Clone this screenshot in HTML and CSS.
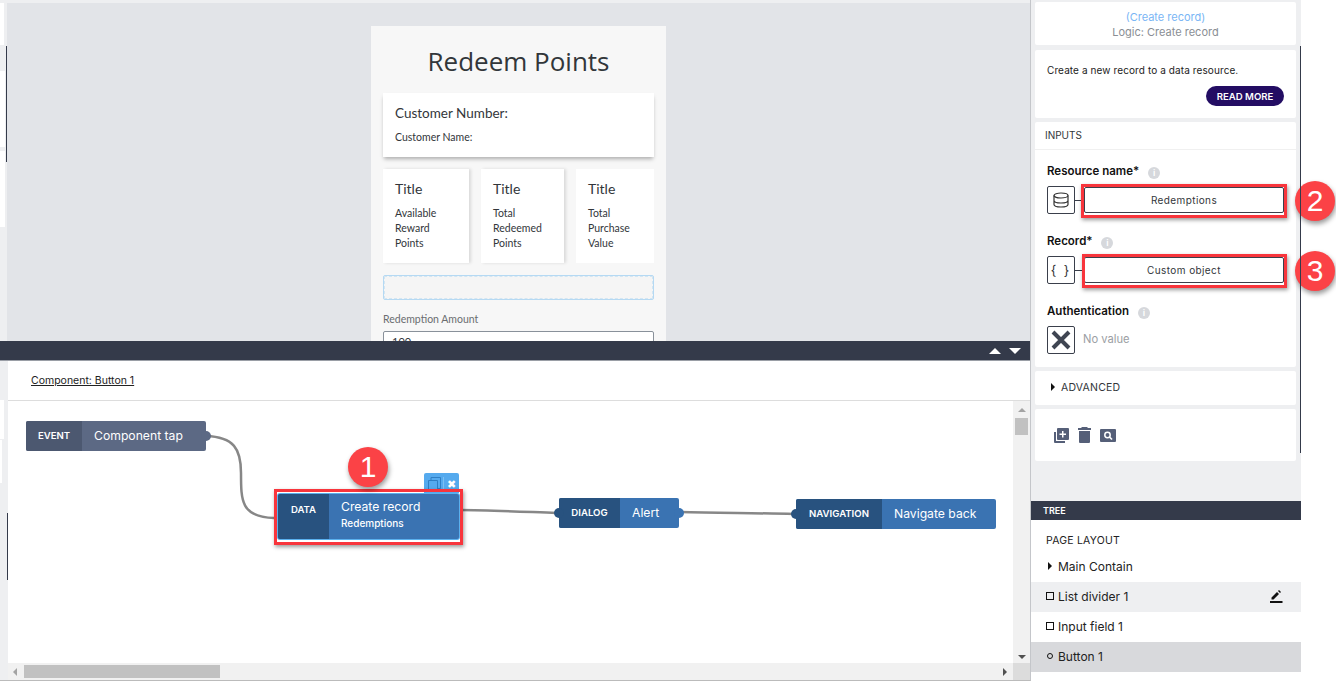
FILE: index.html
```html
<!DOCTYPE html>
<html lang="en">
<head>
    <meta charset="UTF-8">
    <meta name="viewport" content="width=device-width, initial-scale=1.0">
    <title>Logic: Create record</title>
    <link rel="stylesheet" href="styles.css">
</head>
<body>
    <div class="app">
        <div class="main">
            <div class="preview">
                <div class="phone">
                    <h1>Redeem Points</h1>
                    <div class="customer-card">
                        <div class="customer-number">Customer Number:</div>
                        <div class="customer-name">Customer Name:</div>
                    </div>
                    <div class="stats">
                        <div class="stat">
                            <div class="stat-title">Title</div>
                            <div class="stat-text">Available<br>Reward<br>Points</div>
                        </div>
                        <div class="stat">
                            <div class="stat-title">Title</div>
                            <div class="stat-text">Total<br>Redeemed<br>Points</div>
                        </div>
                        <div class="stat stat-last">
                            <div class="stat-title">Title</div>
                            <div class="stat-text">Total<br>Purchase<br>Value</div>
                        </div>
                    </div>
                    <div class="dropzone"></div>
                    <label class="field-label">Redemption Amount</label>
                    <div class="field-input">100</div>
                </div>
            </div>

            <div class="logic">
                <div class="logic-bar">
                    <span class="arrow-up"></span>
                    <span class="arrow-down"></span>
                </div>
                <div class="logic-head"><a href="#">Component: Button 1</a></div>
                <div class="logic-body">
                    <div class="canvas">
                        <svg class="wires" width="1005" height="262" viewBox="0 0 1005 262">
                            <path d="M198 35 C 226 36 233 48 233 72 C 233 100 233 116 266 117" />
                            <path d="M452 109 C 480 109 520 111 548 112" />
                            <path d="M672 111 C 710 112 750 112 786 113" />
                        </svg>

                        <div class="node node-event">
                            <span class="node-type">EVENT</span>
                            <span class="node-name">Component tap</span>
                            <span class="dot dot-right"></span>
                        </div>

                        <div class="node-tools">
                            <svg width="15" height="15" viewBox="0 0 15 15"><path d="M1.500 3.500h9v11h-9z M4 3.500v-3h9.500v11h-3" fill="none" stroke="#2f7fc4" stroke-width="1" /></svg>
                            <span class="node-close">&#10006;</span>
                        </div>
                        <div class="node node-data">
                            <span class="node-type">DATA</span>
                            <span class="node-name">Create record<small>Redemptions</small></span>
                        </div>

                        <div class="node node-dialog">
                            <span class="dot dot-left"></span>
                            <span class="node-type">DIALOG</span>
                            <span class="node-name">Alert</span>
                            <span class="dot dot-right"></span>
                        </div>

                        <div class="node node-nav">
                            <span class="dot dot-left"></span>
                            <span class="node-type">NAVIGATION</span>
                            <span class="node-name">Navigate back</span>
                        </div>

                        <div class="mark mark-node"></div>
                        <div class="badge badge-one">1</div>
                    </div>
                    <div class="vscroll">
                        <span class="sb-up"></span>
                        <span class="vthumb"></span>
                        <span class="sb-down"></span>
                    </div>
                    <div class="hscroll">
                        <span class="sb-left"></span>
                        <span class="hthumb"></span>
                        <span class="sb-right"></span>
                    </div>
                    <div class="corner"></div>
                </div>
            </div>
        </div>

        <div class="side">
            <div class="props">
                <div class="card card-title">
                    <div class="title-link">(Create record)</div>
                    <div class="title-sub">Logic: Create record</div>
                </div>
                <div class="card card-desc">
                    <p>Create a new record to a data resource.</p>
                    <button class="read-more">READ MORE</button>
                </div>
                <div class="card card-inputs">
                    <div class="inputs-head">INPUTS</div>
                    <div class="prop prop-resource">
                        <div class="prop-label">Resource name* <span class="info">i</span></div>
                        <div class="prop-row">
                            <span class="prop-icon">
                                <svg width="18" height="18" viewBox="0 0 18 18" fill="none" stroke="#333" stroke-width="1.200">
                                    <ellipse cx="9" cy="4.500" rx="7" ry="2.500" />
                                    <path d="M2 4.500v9c0 1.400 3 2.500 7 2.500s7-1.100 7-2.500v-9 M2 9.500c0 1.400 3 2.500 7 2.500s7-1.100 7-2.500" />
                                </svg>
                            </span>
                            <span class="prop-tick"></span>
                            <span class="prop-value">Redemptions</span>
                        </div>
                    </div>
                    <div class="prop">
                        <div class="prop-label">Record* <span class="info">i</span></div>
                        <div class="prop-row">
                            <span class="prop-icon prop-braces">{ }</span>
                            <span class="prop-tick"></span>
                            <span class="prop-value">Custom object</span>
                        </div>
                    </div>
                    <div class="prop">
                        <div class="prop-label">Authentication <span class="info">i</span></div>
                        <div class="prop-row">
                            <span class="prop-icon">
                                <svg width="22" height="22" viewBox="0 0 22 22"><path d="M3 3l16 16M19 3L3 19" stroke="#3f4552" stroke-width="4" /></svg>
                            </span>
                            <span class="no-value">No value</span>
                        </div>
                    </div>
                </div>
                <div class="card card-advanced"><span class="caret"></span>ADVANCED</div>
                <div class="card card-tools">
                    <svg width="15" height="15" viewBox="0 0 15 15"><path d="M0 4h2v9h9v2H1a1 1 0 0 1-1-1z" fill="#555f78" /><path d="M4 0h10a1 1 0 0 1 1 1v10a1 1 0 0 1-1 1H4a1 1 0 0 1-1-1V1a1 1 0 0 1 1-1z M8 3v2.500H5.500v1.500H8v2.500h1.500V7H12V5.500H9.500V3z" fill="#555f78" fill-rule="evenodd" /></svg>
                    <svg width="13" height="16" viewBox="0 0 13 16"><path d="M4 0h5l1 1h3v2H0V1h3z M1 4h11v11a1 1 0 0 1-1 1H2a1 1 0 0 1-1-1z" fill="#555f78" /></svg>
                    <svg width="16" height="13" viewBox="0 0 16 13"><path d="M1 0h14a1 1 0 0 1 1 1v11a1 1 0 0 1-1 1H1a1 1 0 0 1-1-1V1a1 1 0 0 1 1-1z" fill="#555f78" /><circle cx="7.500" cy="6" r="2.700" fill="none" stroke="#fff" stroke-width="1.500" /><path d="M9.500 8l2.500 2.500" stroke="#fff" stroke-width="1.700" /></svg>
                </div>
            </div>

            <div class="tree">
                <div class="tree-head">TREE</div>
                <div class="tree-title">PAGE LAYOUT</div>
                <div class="tree-row"><span class="caret"></span>Main Contain</div>
                <div class="tree-row tree-hover"><span class="square"></span>List divider 1
                    <svg class="edit" width="13" height="13" viewBox="0 0 13 13"><path d="M0 11h12.500v2H0z M1.500 7.500l5.500-5.500 2 2-5.500 5.500h-2z M8 1l1-1 2 2-1 1z" fill="#111" /></svg>
                </div>
                <div class="tree-row"><span class="square"></span>Input field 1</div>
                <div class="tree-row tree-selected"><span class="round"></span>Button 1</div>
            </div>

            <div class="mark mark-resource"></div>
            <div class="badge badge-two">2</div>
            <div class="mark mark-record"></div>
            <div class="badge badge-three">3</div>
        </div>
    </div>
</body>
</html>
```

FILE: styles.css
```css
* {
    box-sizing: border-box;
}
html, body {
    margin: 0;
    height: 100%;
    overflow: hidden;
}
body {
    font-family: Inter, "Liberation Sans", sans-serif;
    background-color: #fff;
    color: #32363a;
}
.app {
    display: flex;
    width: 1336px;
    height: 681px;
}
.main {
    width: 1031px;
    display: flex;
    flex-direction: column;
    border-right: 1px solid #c4c6ca;
    border-bottom: 1px solid #bbb;
    background-color: #eeeff1;
    /* leftovers of the window behind, along the left edge */
    background-image:
        linear-gradient(#343a4a, #343a4a),
        linear-gradient(#343a4a, #343a4a),
        linear-gradient(#fff, #fff),
        linear-gradient(#fff, #fff),
        linear-gradient(#fff, #fff),
        linear-gradient(#fff, #fff),
        linear-gradient(#fff, #fff);
    background-repeat: no-repeat;
    background-size: 1px 116px, 1px 67px, 4px 42px, 5px 76px, 5px 76px, 4px 39px, 2px 43px;
    background-position: 6px 46px, 7px 513px, 0 3px, 0 71px, 0 151px, 0 400px, 0 440px;
}

/* preview */
.preview {
    height: 341px;
    margin-top: 3px;
    margin-left: 7px;
    padding-top: 23px;
    background: #e2e4e8;
    overflow: hidden;
    flex: none;
}
.phone {
    width: 295px;
    margin-left: 364px;
    height: 340px;
    padding: 0 12px;
    background: #f7f7f7;
    font-family: Lato, "Liberation Sans", sans-serif;
}
.phone h1 {
    margin: 0;
    padding-top: 17px;
    height: 67px;
    font-family: "Open Sans", "Liberation Sans", sans-serif;
    font-size: 26px;
    line-height: 36px;
    font-weight: 400;
    text-align: center;
    color: #32363a;
}
.customer-card {
    height: 64px;
    padding: 12px 12px 0;
    background: #fff;
    box-shadow: 0 3px 4px -1px rgba(0, 0, 0, 0.3);
}
.customer-number {
    font-size: 13.500px;
    line-height: 16px;
}
.customer-name {
    margin-top: 9px;
    font-size: 10.500px;
    line-height: 14px;
}
.stats {
    display: flex;
    gap: 12px;
    margin-top: 12px;
}
.stat {
    width: 86px;
    height: 94px;
    padding: 12px 12px 0;
    background: #fff;
    box-shadow: 2px 0 3px rgba(0, 0, 0, 0.12);
}
.stat + .stat {
    width: 83px;
}
.stat.stat-last {
    width: 78px;
    box-shadow: none;
}
.stat-title {
    font-size: 14px;
    line-height: 16px;
}
.stat-text {
    margin-top: 9px;
    font-size: 10.500px;
    line-height: 15px;
}
.dropzone {
    height: 25px;
    margin-top: 12px;
    border: 1px solid #b5d9f3;
    border-radius: 2px;
    outline: 1px dashed #d4e6f2;
    outline-offset: -2px;
    background: #f5f5f5;
}
.field-label {
    display: block;
    margin-top: 12px;
    font-size: 10.500px;
    line-height: 14px;
    color: #6a6d70;
}
.field-input {
    height: 30px;
    margin-top: 5px;
    padding: 3px 8px;
    border: 1px solid #89919a;
    border-radius: 2px;
    background: #fff;
    font-size: 11px;
}

/* logic panel */
.logic {
    flex: 1;
    display: flex;
    flex-direction: column;
    margin-left: 8px;
    margin-top: -3px;
    position: relative;
    background: #fff;
}
.logic-bar {
    display: flex;
    justify-content: flex-end;
    align-items: center;
    gap: 8px;
    height: 20px;
    margin-left: -8px;
    padding-right: 9px;
    background: #343a4a;
    border-bottom: 1px solid #9a9ea6;
}
.arrow-up, .arrow-down {
    width: 0;
    height: 0;
    border-left: 6px solid transparent;
    border-right: 6px solid transparent;
}
.arrow-up {
    border-bottom: 6px solid #fff;
}
.arrow-down {
    border-top: 6px solid #fff;
}
.logic-head {
    height: 40px;
    padding: 14px 0 0 23px;
    border-bottom: 1px solid #ddd;
    font-size: 10.500px;
    line-height: 12px;
}
.logic-head a {
    color: #222;
}
.logic-body {
    flex: 1;
    display: grid;
    grid-template-columns: 1005px 17px;
    grid-template-rows: 262px 17px;
}
.canvas {
    position: relative;
    overflow: hidden;
}
.wires {
    position: absolute;
    left: 0;
    top: 0;
}
.wires path {
    fill: none;
    stroke: #878787;
    stroke-width: 2.500;
}
.node {
    position: absolute;
    display: flex;
    height: 30px;
    border-radius: 2px;
    color: #fff;
    background: #3a73b2;
}
.node-type {
    display: flex;
    align-items: center;
    justify-content: center;
    flex: none;
    padding-bottom: 1px;
    border-radius: 2px 0 0 2px;
    background: #28527f;
    font-size: 9.600px;
    font-weight: 600;
}
.node-name {
    padding-left: 12px;
    font-size: 12.200px;
    line-height: 29px;
}
.dot {
    position: absolute;
    top: 10px;
    width: 10px;
    height: 10px;
    border-radius: 50%;
    background: inherit;
}
.dot-right {
    right: -5px;
    background: #3a73b2;
}
.dot-left {
    left: -5px;
    background: #28527f;
}
.node-event {
    left: 18px;
    top: 20px;
    width: 180px;
    background: #5c6984;
}
.node-event .node-type {
    width: 56px;
    background: #4c5870;
}
.node-event .dot-right {
    background: #5c6984;
}
.node-data {
    left: 270px;
    top: 93px;
    width: 181px;
    height: 45px;
    box-shadow: 0 0 0 1px #5ab0ee;
}
.node-data .node-type {
    width: 51px;
    align-items: flex-start;
    padding: 10px 0 0;
}
.node-data .node-name {
    line-height: 15px;
    padding-top: 5px;
}
.node-data small {
    display: block;
    margin-top: 2px;
    font-size: 10px;
    line-height: 14px;
    font-weight: 500;
}
.node-tools {
    position: absolute;
    left: 416px;
    top: 72px;
    width: 35px;
    height: 20px;
    display: flex;
    align-items: flex-start;
    padding: 4px 0 0 3px;
    border-radius: 2px 2px 0 0;
    background: #55aaee;
}
.node-close {
    height: 14px;
    margin-left: 1px;
    padding-left: 3px;
    border-left: 1px solid #7cc0f3;
    font-size: 11px;
    line-height: 14px;
    color: #fff;
}
.node-dialog {
    left: 551px;
    top: 97px;
    width: 120px;
}
.node-dialog .node-type {
    width: 61px;
}
.node-nav {
    left: 788px;
    top: 98px;
    width: 200px;
}
.node-nav .node-type {
    width: 86px;
}
.mark {
    position: absolute;
    border: 3px solid #f8353c;
    box-shadow: 1px 2px 4px rgba(0, 0, 0, 0.4);
    pointer-events: none;
}
.mark-node {
    left: 266px;
    top: 88px;
    width: 189px;
    height: 56px;
}
.badge {
    position: absolute;
    width: 40px;
    height: 40px;
    border-radius: 50%;
    background: #fb4246;
    box-shadow: 1px 3px 5px rgba(0, 0, 0, 0.4);
    color: #fff;
    font-family: "Liberation Sans", sans-serif;
    font-size: 30px;
    line-height: 40px;
    text-align: center;
}
.badge-one {
    left: 340px;
    top: 46px;
}

/* scrollbars */
.vscroll {
    display: flex;
    flex-direction: column;
    align-items: center;
    background: #f1f1f1;
}
.vthumb {
    width: 13px;
    height: 17px;
    background: #c1c1c1;
}
.sb-up {
    margin: 7px 0 6px;
    border-left: 4px solid transparent;
    border-right: 4px solid transparent;
    border-bottom: 4px solid #a3a3a3;
}
.sb-down {
    margin-top: auto;
    margin-bottom: 4px;
    border-left: 4px solid transparent;
    border-right: 4px solid transparent;
    border-top: 4px solid #505050;
}
.hscroll {
    display: flex;
    align-items: center;
    padding-left: 5px;
    background: #f1f1f1;
}
.hthumb {
    width: 196px;
    height: 13px;
    margin-left: 7px;
    background: #c1c1c1;
}
.sb-left {
    border-top: 4px solid transparent;
    border-bottom: 4px solid transparent;
    border-right: 4px solid #a3a3a3;
}
.sb-right {
    margin-left: auto;
    margin-right: 6px;
    border-top: 4px solid transparent;
    border-bottom: 4px solid transparent;
    border-left: 4px solid #505050;
}
.corner {
    background: #dcdcdc;
}

/* right side */
.side {
    position: relative;
    width: 270px;
    background: #eeeff1;
    height: 681px;
}
.side::after {
    content: "";
    position: absolute;
    left: 269px;
    top: 46px;
    width: 1px;
    height: 407px;
    background: #343a4a;
}
.props {
    height: 501px;
    padding: 2px 4px 0 4px;
}
.card {
    width: 261px;
    background: #fff;
    border-radius: 2px;
}
.card-title {
    height: 43px;
    padding-top: 8px;
    text-align: center;
    font-size: 11px;
    line-height: 15px;
}
.title-link {
    color: #7ab6f5;
}
.title-sub {
    color: #8a8e94;
}
.card-desc {
    position: relative;
    height: 68px;
    margin-top: 5px;
    padding: 14px 12px 0;
}
.card-desc p {
    margin: 0;
    font-size: 10px;
    line-height: 12px;
    letter-spacing: 0.1px;
    color: #222;
}
.read-more {
    display: block;
    margin: 10px 0 0 auto;
    width: 78px;
    height: 20px;
    padding: 0;
    border: none;
    border-radius: 10px;
    background: #230d63;
    color: #fff;
    font-family: inherit;
    font-size: 9.600px;
    font-weight: 600;
}
.card-inputs {
    height: 245px;
    margin-top: 4px;
}
.inputs-head {
    height: 28px;
    padding: 7px 0 0 10px;
    border-bottom: 1px solid #f0f0f0;
    font-size: 10px;
    line-height: 13px;
}
.prop {
    margin-top: 20px;
    padding: 0 12px;
}
.prop.prop-resource {
    margin-top: 14px;
}
.prop-label {
    font-size: 11.500px;
    font-weight: 600;
    line-height: 15px;
    color: #111;
}
.info {
    display: inline-block;
    width: 12px;
    height: 12px;
    margin-left: 6px;
    border-radius: 50%;
    background: #d6d8dc;
    color: #fff;
    font-size: 9px;
    line-height: 12px;
    text-align: center;
    vertical-align: -1px;
}
.prop-row {
    display: flex;
    align-items: center;
    height: 28px;
    margin-top: 7px;
}
.prop-icon {
    display: flex;
    align-items: center;
    justify-content: center;
    width: 28px;
    height: 28px;
    flex: none;
    border: 1px solid #3a3f4b;
    border-radius: 2px;
    color: #333;
}
.prop-braces {
    font-size: 13px;
    letter-spacing: 2px;
}
.prop-tick {
    width: 9px;
    height: 1px;
    background: #3a3f4b;
}
.prop-value {
    flex: 1;
    height: 26px;
    border: 1px solid #3a3f4b;
    border-radius: 2px;
    font-size: 10px;
    line-height: 24px;
    letter-spacing: 0.4px;
    text-align: center;
}
.no-value {
    margin-left: 8px;
    padding-bottom: 2px;
    font-size: 11.200px;
    color: #9b9ea3;
}
.card-advanced {
    display: flex;
    align-items: center;
    height: 34px;
    margin-top: 4px;
    padding: 0 0 2px 16px;
    font-size: 10.500px;
    letter-spacing: 0.2px;
}
.caret {
    display: inline-block;
    flex: none;
    margin-right: 6px;
    border-top: 4px solid transparent;
    border-bottom: 4px solid transparent;
    border-left: 4px solid #111;
}
.card-tools {
    display: flex;
    align-items: center;
    gap: 9px;
    height: 52px;
    margin-top: 4px;
    padding-left: 19px;
}
.tree {
    width: 270px;
    background: #fff;
    height: 180px;
}
.tree-head {
    height: 19px;
    padding-left: 12px;
    background: #343a4a;
    color: #fff;
    font-size: 9px;
    font-weight: 600;
    line-height: 19px;
}
.tree-title {
    height: 32px;
    padding: 15px 0 0 15px;
    font-size: 10.500px;
    line-height: 12px;
    letter-spacing: 0.2px;
    color: #222;
}
.tree-row {
    position: relative;
    display: flex;
    align-items: center;
    height: 30px;
    padding: 0 0 2px 15px;
    font-size: 12px;
    color: #222;
}
.tree-row .caret {
    margin-left: 2px;
    margin-right: 6px;
}
.tree-hover {
    background: #eeeff1;
}
.tree-selected {
    background: #d8d9dc;
}
.square {
    width: 8px;
    height: 8px;
    margin-right: 4px;
    border: 1px solid #111;
}
.round {
    width: 6px;
    height: 6px;
    margin-left: 1px;
    margin-right: 5px;
    border: 1px solid #111;
    border-radius: 50%;
}
.edit {
    position: absolute;
    right: 18px;
    top: 8px;
}
.mark-resource {
    left: 50px;
    top: 184px;
    width: 206px;
    height: 34px;
}
.mark-record {
    left: 51px;
    top: 254px;
    width: 205px;
    height: 34px;
}
.badge-two {
    left: 264px;
    top: 181px;
}
.badge-three {
    left: 264px;
    top: 251px;
}
```
